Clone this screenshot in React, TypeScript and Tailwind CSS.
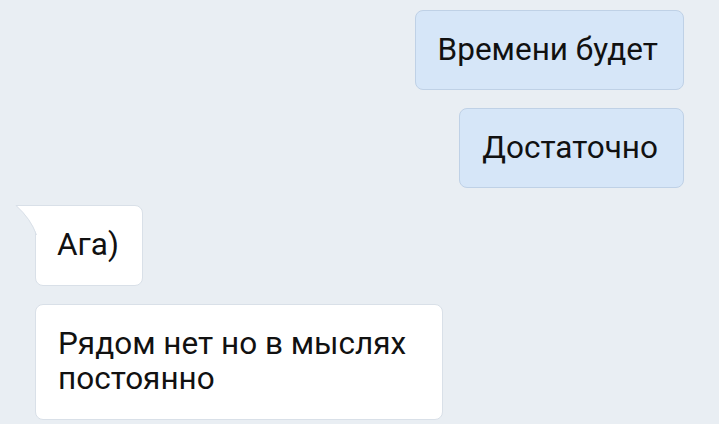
import React from "react";

type Msg = {
  id: number;
  text: string;
  out: boolean;
  tail?: boolean;
};

const messages: Msg[] = [
  { id: 1, text: "Времени будет", out: true },
  { id: 2, text: "Достаточно", out: true },
  { id: 3, text: "Ага)", out: false, tail: true },
  { id: 4, text: "Рядом нет но в мыслях постоянно", out: false },
];

const Bubble = ({ msg }: { msg: Msg }) => {
  if (msg.out) {
    return (
      <div className="flex justify-end">
        <div className="rounded-[8px] border border-[#bfd1e6] bg-[#d6e6f8] pl-[22px] pr-[25px] pt-[21px] pb-[22px] text-[31.5px] leading-[35px] text-[#111]">
          {msg.text}
        </div>
      </div>
    );
  }

  return (
    <div className="flex justify-start">
      <div
        className={
          msg.tail
            ? "relative rounded-[8px] rounded-tl-none border border-[#d9e0e8] bg-white pl-[21px] pr-[23px] pt-[21px] pb-[23px] text-[31.5px] leading-[35px] text-[#111]"
            : "relative max-w-[408px] rounded-[8px] border border-[#d9e0e8] bg-white pl-[22px] pr-6 pt-[21px] pb-[23px] text-[31.5px] leading-[35px] text-[#111]"
        }
      >
        {msg.tail && (
          <svg
            className="absolute -left-[21px] -top-px"
            width="22"
            height="32"
            viewBox="0 0 22 32"
          >
            <path d="M22 0 H1 Q16 14 22 30 Z" fill="#ffffff" />
            <path d="M22 0.5 H1 Q16 14 21.5 30" fill="none" stroke="#d9e0e8" strokeWidth="1" />
          </svg>
        )}
        {msg.text}
      </div>
    </div>
  );
};

export default function App() {
  return (
    <div
      className="h-[424px] w-[719px] overflow-hidden bg-[#e9eef3] px-[35px] pt-[10px]"
      style={{ fontFamily: "Roboto, 'Noto Sans', sans-serif" }}
    >
      <div className="flex flex-col gap-[17.5px]">
        {messages.map((m) => (
          <Bubble key={m.id} msg={m} />
        ))}
      </div>
    </div>
  );
}
